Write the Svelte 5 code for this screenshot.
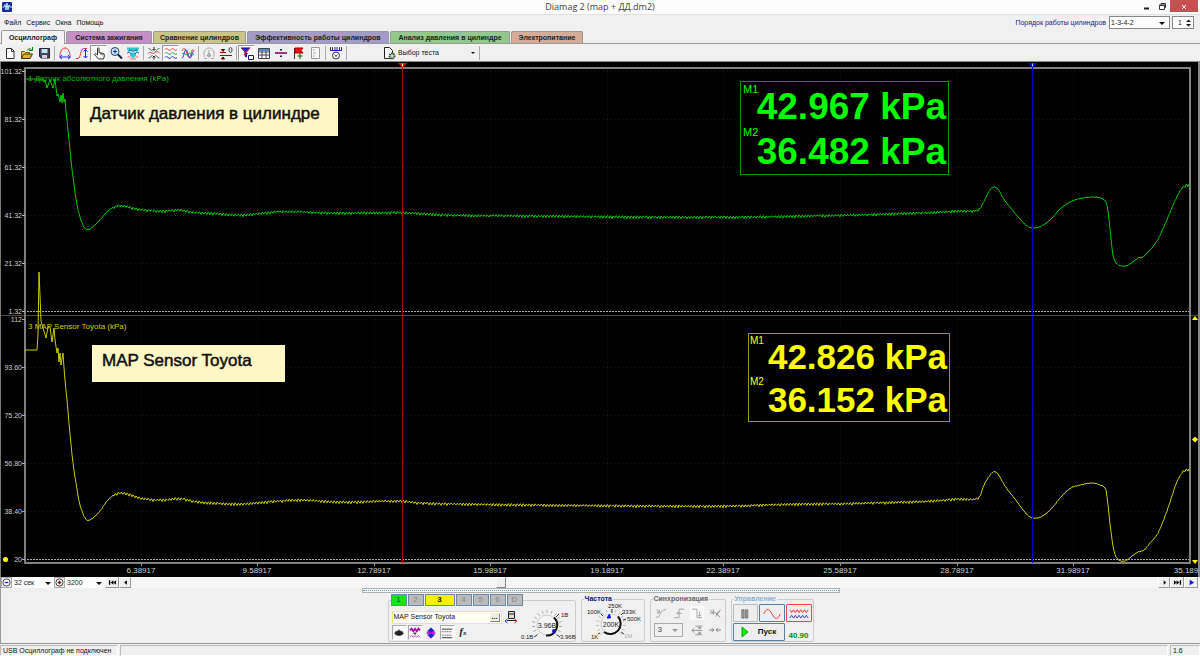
<script>
  const tabs = [
    { label: 'Осциллограф', tone: 'plain', width: 64 },
    { label: 'Система зажигания', tone: 'violet', width: 86 },
    { label: 'Сравнение цилиндров', tone: 'olive', width: 93 },
    { label: 'Эффективность работы цилиндров', tone: 'indigo', width: 142 },
    { label: 'Анализ давления в цилиндре', tone: 'green', width: 120 },
    { label: 'Электропитание', tone: 'peach', width: 72 }
  ];

  const channels = ['1', '2', '3', '4', '5', '6', 'D'];

  const columns = [141, 257, 374, 490, 607, 723, 840, 957, 1073];
  const times = ['6.38917', '9.58917', '12.78917', '15.98917', '19.18917', '22.38917', '25.58917', '28.78917', '31.98917'];
  const upper = [[71, '101.32'], [119, '81.32'], [167, '61.32'], [215, '41.32'], [263, '21.32'], [311, '1.32']];
  const lower = [[319, '112'], [367, '93.60'], [415, '75.20'], [463, '56.80'], [511, '38.40'], [559, '20']];

  const greenStart = [[26, 79], [42, 79], [44, 82], [45, 80], [47, 88], [50, 80], [53, 88], [55, 79], [57, 96], [58, 94], [60, 102], [61, 95], [62, 103], [63, 93], [64, 102], [65, 99], [66, 112]];
  const greenKeys = [[66, 112], [68, 130], [71, 160], [74, 185], [77, 205], [80, 217], [84, 227], [88, 229.5], [92, 227.5], [98, 222], [104, 215], [110, 209], [117, 206], [124, 206], [135, 208.5], [150, 210.5], [165, 211], [180, 210], [195, 212.5], [215, 213.5], [240, 215], [260, 213.5], [280, 211.5], [340, 213], [400, 212.5], [450, 215], [550, 216], [650, 217], [740, 217], [800, 216], [850, 215], [900, 213.5], [930, 212.5], [957, 211], [979, 209.5], [984, 201], [990, 190], [994, 187], [998, 189], [1003, 198], [1010, 207], [1020, 219], [1029, 227], [1039, 227], [1050, 220], [1060, 209], [1070, 202], [1080, 198.5], [1095, 197], [1103, 199], [1107, 205], [1109, 219], [1112, 248], [1114, 259], [1118, 264.5], [1122, 266], [1127, 265.5], [1134, 261], [1139, 257.5], [1143, 257], [1150, 250], [1158, 239], [1166, 222], [1174, 203], [1180, 191], [1186, 185], [1190, 185]];

  const yellowStart = [[25, 350], [37, 350], [38, 335], [39, 272], [40, 295], [41, 321], [43, 328], [46, 338], [48, 327], [50, 327], [52, 342], [54, 328], [55, 340], [57, 353], [58, 348], [59, 362], [60, 353], [61, 365], [63, 353], [64, 368], [65, 380]];
  const yellowKeys = [[65, 380], [67, 400], [70, 434], [73, 463], [76, 483], [79, 501], [82, 511], [85, 518], [88, 520.5], [94, 517], [100, 511], [107, 501], [114, 495], [121, 493], [128, 494], [140, 498], [160, 500], [180, 498.5], [195, 501.5], [240, 504], [265, 502], [300, 500], [340, 502], [400, 501], [420, 503], [500, 504.5], [600, 505.5], [720, 506], [800, 504], [850, 503.5], [900, 502], [930, 501], [957, 499], [979, 497.5], [984, 485], [990, 475], [994, 471.5], [998, 474], [1005, 486], [1015, 499], [1024, 511], [1030, 517], [1037, 518], [1044, 515], [1052, 508], [1060, 498], [1070, 488.5], [1080, 485], [1092, 483], [1100, 485], [1106, 490], [1108, 505], [1111, 532], [1114, 551], [1117, 558], [1121, 561], [1127, 560], [1132, 556], [1138, 552], [1144, 550], [1150, 543], [1158, 533], [1168, 508], [1176, 484], [1182, 473], [1186, 470], [1190, 470]];

  function slope(keys, i) {
    const a = keys[Math.max(i - 1, 0)];
    const b = keys[Math.min(i + 1, keys.length - 1)];
    return (b[1] - a[1]) / (b[0] - a[0]);
  }

  // Sample a smooth curve once per unit of x and add the sensor ripple.
  function trace(start, keys) {
    const out = start.map(([x, y]) => `${x},${y}`);
    let seed = 7;
    for (let i = 0; i < keys.length - 1; i++) {
      const [x0, y0] = keys[i];
      const [x1, y1] = keys[i + 1];
      const w = x1 - x0;
      for (let x = x0; x < x1; x++) {
        const t = (x - x0) / w;
        const y =
          (2 * t ** 3 - 3 * t ** 2 + 1) * y0 +
          (t ** 3 - 2 * t ** 2 + t) * w * slope(keys, i) +
          (3 * t ** 2 - 2 * t ** 3) * y1 +
          (t ** 3 - t ** 2) * w * slope(keys, i + 1);
        seed = (seed * 16807) % 2147483647;
        const amp = x > 112 && x < 980 ? 1.9 : x > 1182 ? 2 : 0.6;
        const ripple = [1, -0.6, -0.1][x % 3] * amp * (0.4 + (seed / 2147483647) * 0.6);
        out.push(`${x},${(y + ripple).toFixed(1)}`);
      }
    }
    return out.join(' ');
  }

  const greenTrace = trace(greenStart, greenKeys);
  const yellowTrace = trace(yellowStart, yellowKeys);

  function ticks(cx, cy, r0, r1, from, to, n) {
    return Array.from({ length: n }, (_, i) => {
      const a = ((from + ((to - from) * i) / (n - 1)) * Math.PI) / 180;
      return [cx + r0 * Math.cos(a), cy + r0 * Math.sin(a), cx + r1 * Math.cos(a), cy + r1 * Math.sin(a)];
    });
  }
  const dialTicks = ticks(29, 20, 12, 15, 135, 405, 15);

  const tools = [
    ['new', 'open', 'save'],
    ['period', 'rise', 'hand', 'zoom', 'fit'],
    ['spread', 'waves', 'overlay'],
    ['gauge', 'zero'],
    ['filter', 'table', 'divide', 'flag', 'notes'],
    ['auto']
  ];
  const pressed = ['hand', 'waves', 'filter'];
</script>

{#snippet icon(name)}
  <svg class="ic" viewBox="0 0 14 14" fill="none" stroke="#222" aria-hidden="true">
    {#if name === 'new'}
      <path d="M3.500 2.500h5l2.500 2.500v7.500h-7.500z" fill="#fff" stroke="#333" /><path d="M8.500 2.500v3h2.500" stroke="#333" />
    {:else if name === 'open'}
      <path d="M1.500 12.500v-7h3l1 1h4v2" fill="#f4d860" stroke="#6b5a10" /><path d="M1.500 12.500l2-4.500h9l-2.500 4.500z" fill="#e0b030" stroke="#3c3208" /><path d="M7 4.500c1-2 3-2 4.500-1M12.500 1v3.500h-3.500" stroke="#080" />
    {:else if name === 'save'}
      <path d="M2.500 2.500h10v9.500h-8.500l-1.500-1.500z" fill="#445" stroke="#223" /><path d="M4.500 3h6v4h-6z" fill="#bde4f0" stroke="none" /><path d="M5 9h5v3h-5z" fill="#ccd" stroke="none" />
    {:else if name === 'period'}
      <path d="M1.500 9.500c1-2 1.500-7.500 5.500-7.500s4.500 5.500 5.500 7.500" stroke="#e33" /><path d="M2 11h10M4 9l-2.500 2 2.500 2M10 9l2.500 2-2.500 2" stroke="#22e" />
    {:else if name === 'rise'}
      <path d="M1 12.500h2c3 0 2-10 6-10h3" stroke="#e33" /><path d="M10.500 3.500v8M8.500 5.500l2-2 2 2M8.500 10l2 2 2-2" stroke="#22e" />
    {:else if name === 'hand'}
      <path d="M5.500 9V2.500c0-1 1.500-1 1.500 0v4l4.500 1c1 .3 1 1 1 2l-1 3.500h-5l-4-4.500c0-1.200 1-1.200 3 .5" fill="#fff" stroke="#333" /><path d="M9 7v2M11 7.500v2" stroke="#333" />
    {:else if name === 'zoom'}
      <circle cx="6" cy="5.500" r="4" fill="#cfe6ff" stroke="#246" /><path d="M4 5.500h4M6 3.500v4" stroke="#12c" /><path d="M9 8.500l4 4" stroke="#124" stroke-width="2" />
    {:else if name === 'fit'}
      <path d="M1 2.500h12M2 5.500l2.500-2h5l2.500 2" stroke="#2bc8c8" stroke-width="2" /><path d="M4 6.500h6v3l-3 3-3-3z" fill="#2cc8dc" stroke="none" /><path d="M1 7.500c2-2 3-1 4 .5M13 7.500c-2-2-3-1-4 .5M3 3.500c2 2 6 2 8 0" stroke="#1a4c9c" /><path d="M1.500 11h3M9.500 11h3M4 13h6" stroke="#e66" />
    {:else if name === 'spread'}
      <path d="M1 7.500c2-3 4 1 6-.500s4-2 6 .500" stroke="#d44" /><path d="M1.500 2.500c2 0 3 2 4 3M12.500 2.500c-2 0-3 2-4 3M1.500 12c2 0 3-2 4-3M12.500 12c-2 0-3-2-4-3" stroke="#3a7a4a" /><path d="M7 1v3M5.500 3l1.500 1.500L8.500 3M7 13.500v-3M5.500 11.500L7 10l1.500 1.500" />
    {:else if name === 'waves'}
      <path d="M1 3.500c2-3 4 3 6 0s4 3 6 0" stroke="#e33" /><path d="M1 7.500c2-3 4 3 6 0s4 3 6 0" stroke="#0a4" /><path d="M1 11.500c2-3 4 3 6 0s4 3 6 0" stroke="#22e" />
    {:else if name === 'overlay'}
      <path d="M1 5c2-5 4-1 5 3s3 4 4 0 2-6 3-3" stroke="#e33" /><path d="M1 12c2 0 2-8 4-8s2 8 4 8 2-8 4-6" stroke="#22e" /><path d="M1 8c2-3 4 3 6 0s4 3 6 0" stroke="#0a4" />
    {:else if name === 'gauge'}
      <path d="M2.500 11c-2-5 1-9 4.500-9s6.500 4 4.500 9M7 4v8M2 12.500h3M9 12.500h3" stroke="#aaa" /><path d="M5 10l2-3 2 3z" stroke="#999" />
    {:else if name === 'zero'}
      <path d="M1 6.500h6M1 9.500h12" stroke="#a00" /><path d="M2.500 3.500h3L4 5.500zM2.500 13h3L4 11z" fill="#600" stroke="#600" /><ellipse cx="11.500" cy="4" rx="1.500" ry="2.500" stroke="#444" />
    {:else if name === 'filter'}
      <path d="M1 2h9L6.500 6v5l-1.500-1V6z" fill="#22e" stroke="#118" /><path d="M1 2l7 6M10 1.500L4 9" stroke="#e22" /><path d="M8.500 9.500h5v4h-5z" fill="#fff" stroke="#118" />
    {:else if name === 'table'}
      <path d="M1.500 2.500h11v10h-11zM1.500 6h11M1.500 9h11M5 3v10M9 3v10" stroke="#445" fill="#fff" /><path d="M2 3h10v2H2z" fill="#58c" stroke="none" />
    {:else if name === 'divide'}
      <path d="M1 7h12" stroke="#a03090" stroke-width="2" /><path d="M6 4h2L7 3zM6 10h2L7 11z" fill="#222" />
    {:else if name === 'flag'}
      <path d="M3.500 2v11" stroke="#333" /><path d="M4 2h8l-2 2.500L12 7H4z" fill="#e11" stroke="#a00" /><path d="M9 7v6M6.500 10h5" stroke="#060" />
    {:else if name === 'notes'}
      <path d="M3.500 1.500h8v11h-8z" fill="#f6f6f6" stroke="#999" /><path d="M5 4h2M5 7h3M5 10h2" stroke="#aaa" />
    {:else if name === 'auto'}
      <path d="M1.500 1v3M3.500 1v3M6 1v3M8 1v3M10.500 1v3M12.500 1v3" stroke="#444" /><path d="M1 4.500h12" stroke="#22e" /><circle cx="7" cy="9.500" r="3.500" fill="#fff" stroke="#333" /><path d="M5.500 8.500l1.500 2 1.500-2" stroke="#22e" />
    {:else if name === 'test'}
      <path d="M2.500 1.500h5l3 3v8h-8z" fill="#fff" /><circle cx="10" cy="10" r="2.500" fill="#cdc" stroke="#454" stroke-width="2" stroke-dasharray="1.500 .6" />
    {:else if name === 'eye'}
      <path d="M2 7.500c2.500-4 7.500-4 10 0-2.500 3-7.500 3-10 0z" fill="#222" /><path d="M3 5l1 1M7 3v2M11 5l-1 1" />
    {:else if name === 'invert'}
      <path d="M1 4l2-2 2 3 2-3 2 3 2-3 2 2" stroke="#a0a" stroke-width="2" /><path d="M1 12l2-2 2 2 2-2 2 2 2-2 2 2" stroke="#a3a" /><path d="M7 6v3M5.500 7.500h3" />
    {:else if name === 'shift'}
      <path d="M7 1l4 4H8.500v4H11L7 13 3 9h2.500V5H3z" fill="#22d" stroke="#22d" /><path d="M2 7h10" stroke="#c0c" stroke-width="2" />
    {:else if name === 'lines'}
      <path d="M1 2.500h12M1 12.500h12" /><path d="M1 5.500h12M1 9.500h12" stroke-dasharray="1 1" />
    {:else if name === 'probe'}
      <path d="M4.500 1.500h6v7h-6z" fill="#ddd" /><path d="M3 10.500h9M5 4h5" /><path d="M3.500 9L1 11l2.500 2" stroke="#22d" /><path d="M10.500 9l2.500 2-2.500 2" stroke="#e22" />
    {:else if name === 'slope'}
      <path d="M1 12c7 1 3-9 12-9M2 3l3 4M5 3v4H2" stroke="#999" />
    {:else if name === 'front'}
      <path d="M1 12.500h6v-10h6M4 7.500h6M7 5L5 7.500" stroke="#999" />
    {:else if name === 'fall'}
      <path d="M1 2.500h6v10h6M10 5v6M8 9l2 2 2-2" stroke="#999" />
    {:else if name === 'burst'}
      <path d="M1 3l4 4M5 3v4H1M5 9c2-8 4 6 8-6M8 7l5 5M8 11l3-6" stroke="#888" />
    {:else if name === 'window'}
      <path d="M5 2.500h8M5 12.500h8M1 7.500h12M4 5L1 7.500 4 10" stroke="#888" /><path d="M8.500 4h3L10 6zM8.500 11h3L10 9z" fill="#999" stroke="#999" />
    {:else if name === 'meet'}
      <path d="M0 7h6M14 7H8M3 4.500L5.500 7 3 9.500M11 4.500L8.500 7 11 9.500" stroke="#777" />
    {/if}
  </svg>
{/snippet}

<div class="app">
  <header class="title">
    <svg class="logo" viewBox="0 0 12 12" aria-hidden="true"><rect x="1" y="1" width="10" height="10" rx="1" fill="#1a2c9c" /><path d="M1.500 6H3l1-2.500 1 5.500 1-7 1 7 1-5 .6 2H11" fill="none" stroke="#bfe4ff" /></svg>
    <h1>Diamag 2 (map + ДД.dm2)</h1>
    <div class="winbtns">
      <button aria-label="Свернуть"><svg viewBox="0 0 10 10"><path d="M3 7.500h5" stroke="#222" stroke-width="2" /></svg></button>
      <button aria-label="Развернуть"><svg viewBox="0 0 10 10" fill="none" stroke="#333"><path d="M2.500 4.500h5v4h-5zM4 3.500V2.500h4.500v4H8M2 4h6" /></svg></button>
      <button class="close" aria-label="Закрыть"><svg viewBox="0 0 10 10"><path d="M3 4l4 4M7 4L3 8" stroke="#fff" /></svg></button>
    </div>
  </header>

  <div class="menubar">
    <nav><a href="#file">Файл</a><a href="#service">Сервис</a><a href="#windows">Окна</a><a href="#help">Помощь</a></nav>
    <div class="order">
      <label for="order">Порядок работы цилиндров</label>
      <span class="pick order-pick"><select id="order"><option>1-3-4-2</option></select></span>
      <span class="spin"><input type="text" value="1" aria-label="Цилиндр" /><svg viewBox="0 0 7 10" aria-hidden="true"><path d="M1 4h5L3.500 1.500zM1 6h5L3.500 8.500z" fill="#111" /></svg></span>
    </div>
  </div>

  <div class="tabs" role="tablist">
    {#each tabs as t, i}
      <button role="tab" aria-selected={i === 0} class="tab {t.tone}" style="min-width: {t.width}px">{t.label}</button>
    {/each}
  </div>

  <div class="toolbar">
    {#each tools as group}
      {#each group as name}
        <button class="tool" class:pressed={pressed.includes(name)} aria-label={name}>{@render icon(name)}</button>
      {/each}
      <i class="sep"></i>
    {/each}
    <button class="test">{@render icon('test')}<span>Выбор теста</span><b></b></button>
    <i class="sep"></i>
  </div>

  <svg class="scope" viewBox="0 62 1200 515" role="img" aria-label="Осциллограф">
    <rect x="0" y="62" width="1200" height="515" fill="#000" />
    <path d="M.5 62v515" stroke="#777" /><path d="M1199 62v515" stroke="#888" stroke-width="2" />
    <g stroke="#081c28" stroke-dasharray="1 3">
      {#each columns as x}<path d="M{x + 0.5} 70V563" />{/each}
      {#each [...upper, ...lower] as [y]}<path d="M27 {y + 0.5}H1189" />{/each}
    </g>
    <path d="M27 311.500H1189M27 559.500H1189" stroke="#aaa" stroke-dasharray="2 1" />
    <path d="M1 315.500H1198" stroke="#484848" />
    <path d="M25 563V68H1190V563Z" fill="none" stroke="#808080" stroke-width="2" />
    <g class="ylab">
      {#each [...upper, ...lower] as [y, s]}<text x="22" y={y + 3}>{s}</text><path d="M22 {y + 0.5}h3" stroke="#aaa" />{/each}
    </g>
    <g class="xlab">
      {#each columns as x, i}<text {x} y="573">{times[i]}</text><path d="M{x + 0.5} 563v3" stroke="#999" />{/each}
      <text x="1186" y="573">35.189</text>
    </g>
    <text class="name" x="28" y="81" fill="#00b800">1 Датчик абсолютного давления (kPa)</text>
    <text class="name" x="28" y="329" fill="#d0d000">3 MAP Sensor Toyota (kPa)</text>
    <polyline points={greenTrace} fill="none" stroke="#00c800" />
    <polyline points={yellowTrace} fill="none" stroke="#cccc00" />
    <path d="M402.500 67V563" stroke="#b00000" /><path d="M398 63h9l-4.500 5z" fill="#f00" /><path d="M402.500 63.500v3" stroke="#fff" />
    <path d="M1032.500 67V563" stroke="#0000c8" /><path d="M1028 63h9l-4.500 5z" fill="#00f" /><path d="M1032.500 63.500v3" stroke="#bbf" />
    <g fill="#ff0">
      <path d="M1192 320h6l-3-4zM1192 560h6l-3 4zM1192 439.500l3-3 3 3-3 3z" /><circle cx="5.500" cy="559.500" r="2.500" />
    </g>
    <g fill="#fff8c6"><rect x="80" y="98" width="258" height="38" /><rect x="92" y="345" width="193" height="37" /></g>
    <g class="note"><text x="90" y="119">Датчик давления в цилиндре</text><text x="102" y="366">MAP Sensor Toyota</text></g>
    <rect x="740.500" y="81.500" width="208" height="93" fill="#000" stroke="#009800" />
    <g fill="#0f0"><g class="mark"><text x="743" y="93">M1</text><text x="743" y="136">M2</text></g>
      <g class="value"><text x="946" y="119">42.967 kPa</text><text x="946" y="164">36.482 kPa</text></g></g>
    <rect x="748.500" y="333.500" width="201" height="88" fill="#000" stroke="#989800" />
    <g fill="#ff0"><g class="mark small"><text x="750" y="344">M1</text><text x="750" y="385">M2</text></g>
      <g class="value small"><text x="947" y="369">42.826 kPa</text><text x="947" y="412">36.152 kPa</text></g></g>
  </svg>

  <div class="scroll">
    <button class="step" aria-label="Уменьшить"><svg viewBox="0 0 10 10"><circle cx="5" cy="5" r="4" fill="#fff" stroke="#333" /><path d="M3 5h4" stroke="#22c" stroke-width="1.500" /></svg></button>
    <span class="pick span-pick"><select aria-label="Длительность"><option>32 сек</option></select></span>
    <button class="step" aria-label="Увеличить"><svg viewBox="0 0 10 10"><circle cx="5" cy="5" r="4" fill="#fff" stroke="#333" /><path d="M3 5h4M5 3v4" stroke="#a00" stroke-width="1.500" /></svg></button>
    <span class="pick count-pick"><select aria-label="Точек"><option>3200</option></select></span>
    <button class="nav wide" aria-label="В начало"><svg viewBox="0 0 10 10"><path d="M1 2.500h1.500v5H1zM6 2.500v5L3 5zM9 2.500v5L6 5z" /></svg></button>
    <button class="nav" aria-label="Назад"><svg viewBox="0 0 10 10"><path d="M6.500 2.500v5L3.500 5z" /></svg></button>
    <div class="track"><i class="thumb"></i></div>
    <button class="nav" aria-label="Вперёд"><svg viewBox="0 0 10 10"><path d="M4 2.500v5L7 5z" /></svg></button>
    <button class="nav wide" aria-label="В конец"><svg viewBox="0 0 10 10"><path d="M1 2.500v5L4 5zM4 2.500v5L7 5zM7.500 2.500H9v5H7.500z" /></svg></button>
    <button class="nav wide" aria-label="Воспроизвести"><svg viewBox="0 0 10 10"><path d="M3 2v6l5-3z" fill="#11f" /></svg></button>
  </div>

  <main>
    <div class="splitter"><i></i></div>
    <div class="panels">
      <fieldset class="input">
        <legend class="channels">
          {#each channels as c}<button class:one={c === '1'} class:three={c === '3'}>{c}</button>{/each}
        </legend>
        <div class="cols">
          <div class="left">
            <div class="sensor">
              <span class="box"><input type="text" value="MAP Sensor Toyota" aria-label="Датчик" /><button aria-label="Выбрать датчик">...</button></span>
              {@render icon('probe')}
            </div>
            <div class="flags">
              <button class="pressed" aria-label="Показать">{@render icon('eye')}</button>
              <button class="pressed" aria-label="Инверсия">{@render icon('invert')}</button>
              <button aria-label="Смещение">{@render icon('shift')}</button>
              <button class="pressed" aria-label="Линии">{@render icon('lines')}</button>
              <button class="fx">f<small>x</small></button>
            </div>
          </div>
          <svg class="dial" viewBox="0 0 58 36">
            {#each dialTicks as [a, b, c, d]}<line x1={a} y1={b} x2={c} y2={d} stroke="#aaa" />{/each}
            <circle cx="29" cy="20" r="10" fill="#f4f4f4" stroke="#ccc" /><path d="M36 12.500a10.500 10.500 0 0 1-8 18" fill="none" stroke="#111" stroke-width="2" />
            <path d="M38 12l3-3M19 30l-3 2M39 30l3 2" stroke="#333" />
            <circle cx="36" cy="26" r="2" fill="#11f" />
            <text x="29" y="23" text-anchor="middle">3.96В</text>
            <text class="s" x="43" y="12">1В</text><text class="s" x="3" y="34">0.1В</text><text class="s" x="42" y="34">3.96В</text>
          </svg>
        </div>
      </fieldset>

      <fieldset class="freq">
        <legend>Частота</legend>
        <svg class="dial" viewBox="0 0 62 38">
          {#each dialTicks as [a, b, c, d]}<line x1={a + 1} y1={b + 1} x2={c + 1} y2={d + 1} stroke="#bbb" />{/each}
          <circle cx="30" cy="21" r="10" fill="#f4f4f4" stroke="#ccc" /><path d="M37 13.500a10.500 10.500 0 0 1-14 15.500" fill="none" stroke="#111" stroke-width="2" />
          <path d="M20 11l2 2M31 6v4M40 12l2-2M42 17l3-1M19 30l-2 1M40 29l3 2" stroke="#333" />
          <path d="M26 15l2.500-4 1 4z" fill="#11f" stroke="#11f" />
          <text x="30" y="24" text-anchor="middle">200K</text>
          <text class="s" x="6" y="11">100K</text><text class="s" x="27" y="5">250K</text><text class="s" x="41" y="11">333K</text><text class="s" x="46" y="18">500K</text>
          <text class="s" x="10" y="36">1K</text><text class="s off" x="43" y="35">1M</text>
        </svg>
      </fieldset>

      <fieldset class="sync">
        <legend>Синхронизация</legend>
        <div class="modes">
          <button aria-label="Уровень">{@render icon('slope')}</button>
          <button aria-label="Фронт">{@render icon('front')}</button>
          <button class="on" aria-label="Спад">{@render icon('fall')}</button>
          <button aria-label="Импульс">{@render icon('burst')}</button>
          <span class="pick sync-pick"><select aria-label="Канал" disabled><option>3</option></select></span>
          <button aria-label="Окно">{@render icon('window')}</button>
          <button aria-label="Центр">{@render icon('meet')}</button>
        </div>
      </fieldset>

      <fieldset class="ctrl">
        <legend>Управление</legend>
        <div class="grid">
          <button class="flat" aria-label="Пауза"><svg viewBox="0 0 24 16"><path d="M8.500 4h2.500v9H8.500zM12.500 4h2.500v9h-2.500z" fill="#999" stroke="#777" /></svg></button>
          <button class="blue" aria-label="Синус"><svg viewBox="0 0 24 16"><path d="M3 8.500c3-7 6-6 9 0s6 7 9 0" fill="none" stroke="#f33" /></svg></button>
          <button class="red" aria-label="Сигналы"><svg viewBox="0 0 24 16" fill="none"><path d="M2 4l2 3 2-3 2 3 2-3 2 3 2-3 2 3 2-3 2 3 2-3" stroke="#e22" /><path d="M2 13l2-3 2 3 2-3 2 3 2-3 2 3 2-3 2 3 2-3 2 3" stroke="#33e" /></svg></button>
          <button class="blue start"><svg viewBox="0 0 8 12"><path d="M1 1v10l6-5z" fill="#0f0" stroke="#0a0" /></svg><span>Пуск</span></button>
          <output>40.90</output>
        </div>
      </fieldset>
    </div>
  </main>

  <footer><span class="usb">USB Осциллограф не подключен</span><span class="fill"></span><span class="ver">1.6</span></footer>
</div>

<style>
  :global(body) { margin: 0; background: #f0f0f0; }
  .app { min-height: 100vh; display: flex; flex-direction: column; background: #f0f0f0; color: #111; font: 7px/10px "Liberation Sans", Arial, sans-serif; overflow: hidden; }
  .app :global(*) { box-sizing: border-box; }
  button, input, select { font: inherit; color: inherit; padding: 0; margin: 0; border: 0; background: none; border-radius: 0; }
  svg { display: block; }
  .ic { width: 14px; height: 14px; flex: none; }

  .title { height: 15px; display: grid; grid-template-columns: 1fr auto 1fr; background: #fcfcfc; border-bottom: 1px solid #e2e2e2; }
  .logo { width: 12px; height: 12px; margin: 1px 0 0 1px; }
  h1 { margin: 0; font: 9px/14px "Open Sans", "Noto Sans", sans-serif; color: #444; }
  .winbtns { display: flex; justify-content: flex-end; padding-right: 2px; }
  .winbtns button { width: 16px; height: 12px; display: grid; place-items: center; }
  .winbtns svg { width: 10px; height: 10px; }
  .winbtns .close { width: 28px; background: #c75050; }

  .menubar { height: 15px; display: flex; justify-content: space-between; align-items: center; }
  nav { display: flex; gap: 5px; padding-left: 4px; }
  nav a { color: #111; text-decoration: none; }
  .order { display: flex; align-items: center; gap: 2px; padding-right: 6px; color: #1a1a80; }
  .pick { position: relative; display: inline-flex; color: #222; }
  .pick select { width: 100%; height: 100%; appearance: none; }
  .pick::after { content: ""; position: absolute; right: 4px; top: 50%; margin-top: -1px; border: 3px solid transparent; border-top-color: #111; border-bottom: 0; pointer-events: none; }
  .order-pick { width: 61px; height: 13px; margin-left: 1px; background: #fff; border: 1px solid #888; padding-left: 1px; }
  .spin { width: 22px; height: 13px; display: flex; align-items: center; background: #fff; border: 1px solid #888; color: #222; }
  .order-pick, .spin { font-size: 7px; }
  .spin input { width: 9px; text-align: right; }
  .spin svg { width: 7px; height: 10px; margin-left: 3px; }

  .tabs { height: 14px; display: flex; align-items: flex-end; gap: 1px; border-bottom: 1px solid #999; padding-left: 1px; }
  .tab { height: 12px; border: 1px solid #999; border-bottom: 0; border-radius: 2px 2px 0 0; font-weight: bold; white-space: nowrap; color: #1c1c1c; }
  .plain { height: 14px; background: #f4f4f4; margin-bottom: -1px; }
  .violet { background: #c490c6; }
  .olive { background: #c9c587; }
  .indigo { background: #a39cc6; }
  .green { background: #92c78d; }
  .peach { background: #d5ab99; }

  .toolbar { height: 18px; display: flex; align-items: center; padding-left: 1px; border-bottom: 1px solid #888; }
  .tool { width: 17px; height: 16px; display: grid; place-items: center; }
  .tool.pressed { background: #f8f8f8; border: 1px solid; border-color: #999 #fff #fff #999; }
  .sep { width: 1px; height: 14px; margin: 0 1px 0 2px; background: #aaa; }
  .test { display: flex; align-items: center; gap: 2px; margin-left: 34px; width: 95px; }
  .test b { margin-left: auto; margin-right: 2px; border: 2px solid transparent; border-top-color: #111; border-bottom: 0; }

  .scope { width: 100%; height: auto; }
  .scope text { font-family: "Liberation Sans", Arial, sans-serif; }
  .ylab text { font-size: 7px; fill: #d0d0d0; text-anchor: end; }
  .xlab text { font-size: 8px; fill: #d0d0d0; text-anchor: middle; }
  .name { font-size: 8px; }
  .note text { font-size: 17px; fill: #111; stroke: #111; stroke-width: 0.5; }
  .mark text { font-size: 11px; }
  .mark.small text { font-size: 10px; }
  .value text { font-size: 37px; font-weight: bold; text-anchor: end; }
  .value.small text { font-size: 35px; }

  .scroll { height: 11px; display: flex; align-items: stretch; background: #f6f6f6; border-left: 1px solid #999; padding-right: 2px; }
  .step { width: 11px; border: 1px solid #aaa; background: #eee; display: grid; place-items: center; }
  .step svg, .nav svg { width: 9px; height: 9px; }
  .span-pick { width: 42px; padding-left: 2px; background: #fff; }
  .count-pick { width: 40px; padding-left: 2px; background: #fff; }
  .count-pick::after, .span-pick::after { right: 3px; }
  .nav { width: 12px; border: 1px solid; border-color: #fff #999 #999 #fff; background: #f0f0f0; display: grid; place-items: center; }
  .nav.wide { width: 14px; }
  .track { flex: 1; display: flex; }
  .thumb { width: 10px; margin-left: 35.5%; border: 1px solid; border-color: #fafafa #888 #888 #fafafa; background: #f0f0f0; }

  main { flex: 1; display: flex; flex-direction: column; align-items: center; border-left: 1px solid #999; border-bottom: 1px solid #999; }
  .splitter { width: 478px; height: 5px; border: 1px solid #b0b0b0; background: #f4f8fc; padding-top: 1px; }
  .splitter i { display: block; border-top: 1px dotted #5aa0e0; }
  .panels { display: flex; gap: 5px; padding: 1px 0; height: 50px; }
  fieldset { margin: 0; padding: 0; border: 1px solid #ccc; border-radius: 2px; min-width: 0; }
  legend { padding: 0 1px; margin-left: 2px; font-weight: bold; height: 10px; }
  .input { width: 188px; }
  .freq { width: 64px; }
  .freq legend { color: #10107c; }
  .sync { width: 76px; }
  .sync legend { color: #666; }
  .ctrl { width: 83px; }
  .ctrl legend { color: #8ab0d4; }

  .channels { display: flex; gap: 1px; height: 12px; padding: 0; font-weight: normal; font-size: 8px; }
  .channels button { width: 16px; height: 12px; background: #bbb; border: 1px solid #6c8aa4; color: #888; }
  .channels .one { background: #1de01d; color: #053; }
  .channels .three { width: 30px; background: #f2f200; color: #220; font-weight: bold; }
  .cols { display: flex; justify-content: space-between; padding: 4px 2px 0 3px; }
  .left { width: 126px; }
  .sensor { display: flex; align-items: center; gap: 2px; }
  .box { display: flex; width: 110px; height: 13px; border: 1px solid #f0f060; background: #fff; padding: 1px; }
  .box input { flex: 1; min-width: 0; }
  .box button { width: 10px; height: 9px; border: 1px solid; border-color: #eee #888 #888 #eee; background: #eee; line-height: 4px; font-weight: bold; }
  .flags { display: flex; gap: 1px; padding-top: 1px; }
  .flags button { width: 15px; height: 15px; display: grid; place-items: center; }
  .flags .ic { width: 12px; height: 12px; }
  .flags .pressed { border: 1px solid; border-color: #aaa #fff #fff #aaa; background: #f8f8f8; }
  .flags .fx { display: block; font: italic bold 10px/14px "Liberation Serif", serif; }
  .fx small { font-size: 7px; }
  .dial text { font-family: "Liberation Sans", Arial, sans-serif; font-size: 7px; fill: #222; }
  .dial text.s { font-size: 6px; }
  .dial text.off { fill: #aaa; }
  .dial { overflow: visible; }
  .input .dial { width: 58px; height: 36px; margin-top: -5px; margin-bottom: -5px; }
  .freq .dial { width: 62px; height: 38px; margin-top: -1px; margin-left: -1px; }

  .modes { display: grid; grid-template-columns: repeat(4, 14px); justify-content: space-between; row-gap: 3px; padding: 2px 3px; }
  .modes button { width: 14px; height: 14px; display: grid; place-items: center; }
  .modes .ic { width: 12px; height: 12px; }
  .modes .on { background: #fafafa; }
  .sync-pick { grid-column: span 2; width: 29px; height: 14px; border: 1px solid #aaa; padding-left: 3px; font-size: 8px; }
  .sync-pick::after { border-top-color: #999; }
  .sync-pick select { opacity: 1; color: #444; }

  .grid { display: grid; grid-template-columns: 25px 26px 26px; gap: 1px; padding: 0 1px; }
  .grid button { height: 18px; border: 1px solid #bbb; background: #eee; display: flex; align-items: center; justify-content: center; border-radius: 1px; }
  .grid button svg { width: 22px; height: 15px; }
  .grid .blue { border-color: #5580a4; }
  .grid .red { border: 1px solid #f04848; }
  .grid .start { grid-column: span 2; gap: 9px; font-weight: bold; font-size: 8px; }
  .grid .start svg { width: 8px; height: 12px; }
  output { align-self: end; text-align: center; font-weight: bold; font-size: 8px; color: #0a8a0a; }

  footer { height: 12px; display: flex; gap: 2px; padding-top: 1px; }
  footer span { border: 1px solid; border-color: #bbb #fff #fff #bbb; padding-left: 2px; }
  .usb { width: 118px; }
  .fill { flex: 1; }
  .ver { width: 30px; }
</style>
